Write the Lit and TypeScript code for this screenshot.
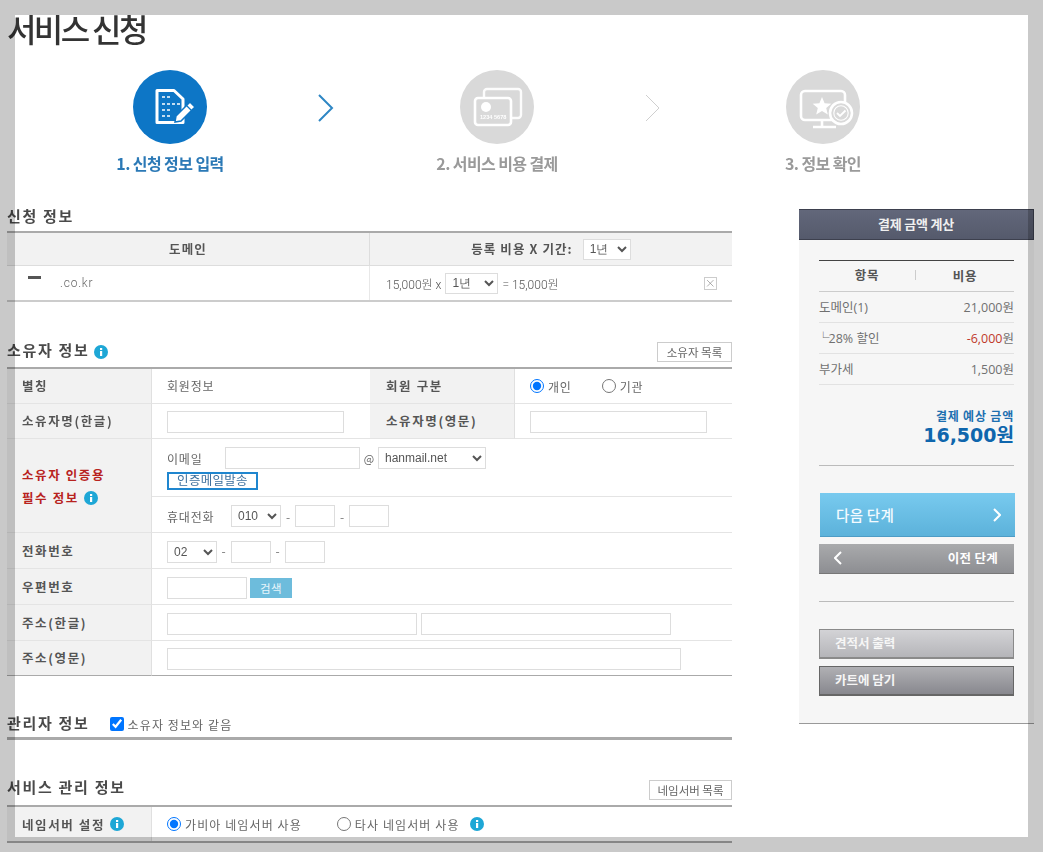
import { LitElement, html, css, svg } from "lit";
import { customElement } from "lit/decorators.js";

const info = html`<svg class="info" viewBox="0 0 14 14" width="14" height="14"><circle cx="7" cy="7" r="7" fill="#1ea7d6"/><rect x="6" y="6" width="2.2" height="5" fill="#fff"/><rect x="6" y="3" width="2.2" height="2" fill="#fff"/></svg>`;

const chev = (color: string, w: number) => html`<svg width="17" height="28" viewBox="0 0 17 28"><path d="M2 1 L15 14 L2 27" fill="none" stroke=${color} stroke-width=${w}/></svg>`;

const docIcon = svg`<circle cx="37" cy="37" r="37" fill="#0d76c6"/>
<path d="M24 20.5 H41 L50 29 V52.5 H24 Z" fill="#0d76c6" stroke="#fff" stroke-width="3" stroke-linejoin="round"/>
<path d="M29 27 h3 m2 0 h3 M29 34 h3 m2 0 h3 m2 0 h3 m2 0 h3 M29 40 h3 m2 0 h3 M29 46 h3 m2 0 h3" stroke="#fff" stroke-width="1.4"/>
<path d="M43 46 L57 32 L62 37 L48 51 L42 52 Z" fill="#fff" stroke="#0d76c6" stroke-width="1.5"/>
<path d="M53.5 35.5 L58.5 40.5" stroke="#0d76c6" stroke-width="1.2"/>`;

const cardIcon = svg`<circle cx="37" cy="37" r="37" fill="#d9d9d9"/>
<path d="M24 27 V22 a3 3 0 0 1 3-3 H58 a3 3 0 0 1 3 3 V45 a3 3 0 0 1-3 3 H52" fill="none" stroke="#fff" stroke-width="2.4" opacity=".9"/>
<rect x="15" y="28" width="36" height="27" rx="3" fill="#d9d9d9" stroke="#fff" stroke-width="2.6"/>
<circle cx="26" cy="37" r="5" fill="#fff"/>
<text x="20" y="49" font-size="5.6" font-weight="700" fill="#fff" font-family="Liberation Sans, sans-serif">1234 5678</text>`;

const monIcon = svg`<circle cx="37" cy="37" r="37" fill="#d9d9d9"/>
<rect x="15" y="21" width="44" height="29" rx="4" fill="none" stroke="#fff" stroke-width="2.6"/>
<path d="M36 50 V56 M27 57 H50" stroke="#fff" stroke-width="2.6"/>
<path d="M36 27 L38.6 33.2 L45.3 33.7 L40.2 38 L41.8 44.6 L36 41 L30.2 44.6 L31.8 38 L26.7 33.7 L33.4 33.2 Z" fill="#fff"/>
<circle cx="55" cy="43" r="11" fill="#d9d9d9" stroke="#fff" stroke-width="2.6"/>
<circle cx="55" cy="43" r="7.2" fill="none" stroke="#fff" stroke-width="1.1"/>
<path d="M51 43 L54 46 L59.5 40.5" fill="none" stroke="#fff" stroke-width="1.8"/>`;

@customElement("app-root")
export class AppRoot extends LitElement {
  static styles = css`
    :host { display: block; width: 1043px; height: 852px; overflow: hidden; background: #c9c9c9; padding: 15px; box-sizing: border-box; font-family: "Noto Sans CJK KR", "Liberation Sans", sans-serif; color: #666; font-size: 12px; }
    * { box-sizing: border-box; }
    .panel { display: flow-root; width: 1013px; height: 822px; background: #fff; }
    .sheet { width: 1027px; margin-left: -8px; mix-blend-mode: multiply; }
    h1 { margin: -2px 0 0; height: 30px; font-size: 32px; line-height: 30px; font-weight: 500; letter-spacing: -2.6px; color: #333; }
    .steps { display: flex; margin-top: 27px; padding-left: 89px; height: 104px; }
    .step { width: 148px; display: flex; flex-direction: column; align-items: center; }
    .step svg { display: block; }
    .step span { margin-top: 9px; height: 20px; line-height: 20px; font-size: 16px; font-weight: 700; letter-spacing: -.6px; color: #9a9a9a; white-space: nowrap; }
    .step.on span { color: #2b79b6; }
    .arrow { width: 178px; height: 74px; padding: 2px 16px 0 0; display: flex; align-items: center; justify-content: center; }
    .arrow.a1 { width: 179px; }
    .body { display: flex; margin-top: 34px; }
    .main { width: 725px; flex: none; }
    .side { width: 235px; margin-left: 67px; margin-top: 1px; flex: none; }
    .head { display: flex; align-items: flex-start; justify-content: space-between; height: 25px; }
    .head.first { height: 23px; }
    .tail { display: flex; align-items: flex-start; }
    h2 { margin: 0; font-size: 15px; line-height: 16px; font-weight: 700; letter-spacing: 1.7px; color: #4a4a4a; white-space: nowrap; }
    .info { display: block; flex: none; }
    .head .info { margin-left: 4px; margin-top: 3px; }
    .mini { width: 75px; height: 20px; border: 1px solid #ccc; background: #fff; font: inherit; font-size: 11.5px; color: #666; padding: 0; }
    .mini.wide { width: 83px; }
    .domain { border-top: 2px solid #aaa; border-bottom: 2px solid #ccc; height: 71px; display: grid; grid-template-columns: 363px 362px; grid-template-rows: 33px 34px; }
    .domain > div { display: flex; align-items: center; }
    .dh { background: #f2f2f2; justify-content: center; font-weight: 700; font-size: 12.5px; letter-spacing: 1.1px; color: #555; border-bottom: 1px solid #ddd; padding-bottom: 2px; }
    .dh.l { border-right: 1px solid #ddd; }
    .dd.l { border-right: 1px solid #e8e8e8; padding-left: 21px; }
    .dd.r { padding-left: 16px; font-family: "Roboto", "Noto Sans CJK KR", sans-serif; font-weight: 300; font-size: 12px; letter-spacing: 0; color: #555; }
    .blot { width: 13px; height: 3px; background: #555; margin-top: -12px; }
    .tld { margin-left: 19px; font-family: "Roboto", sans-serif; font-weight: 300; font-size: 12px; letter-spacing: .8px; }
    select { height: 22px; border: 1px solid #ddd; background: #fff; font-family: "Liberation Sans", sans-serif; font-size: 12px; color: #555; padding: 0 0 0 2px; margin: 0; border-radius: 0; }
    .dh select { width: 48px; height: 21px; margin: 2px 0 0 10px; font-weight: 400; letter-spacing: 0; }
    .dd select { width: 53px; margin: 0 4px; height: 21px; }
    .x { margin-left: auto; margin-right: 15px; width: 13px; height: 13px; border: 1px solid #ccc; display: block; background: #fff; }
    .form { border-top: 2px solid #aaa; display: grid; grid-template-columns: 145px 218px 145px 217px; grid-template-rows: 35px 35px 94px 36px 36px 36px 35px; }
    .form > div { display: flex; align-items: center; border-bottom: 1px solid #e4e4e4; }
    .form > div.end { border-bottom-color: #aaa; }
    .lab { background: #f2f2f2; border-right: 1px solid #e0e0e0; padding-left: 15px; font-weight: 700; font-size: 12.5px; letter-spacing: 1.6px; color: #555; gap: 5px; white-space: nowrap; }
    .lab.r { padding-left: 16px; }
    .form > .up { padding-bottom: 2px; }
    .form > .lab.red { color: #b8231e; display: block; padding-top: 24px; line-height: 23px; }
    .lab.red .ln { display: flex; align-items: center; gap: 5px; }
    .val { padding-left: 15px; letter-spacing: .8px; gap: 14px; }
    .val input[type="text"], .val select { margin-top: 2px; }
    .search { margin-top: 2px; }
    .span3 { grid-column: span 3; }
    input[type="text"] { height: 22px; border: 1px solid #ddd; background: #fff; padding: 0; margin: 0; display: block; flex: none; }
    .w177 { width: 177px; } .w135 { width: 135px; } .w40 { width: 40px; } .w80 { width: 80px; } .w250 { width: 250px; } .w514 { width: 514px; }
    .form > .stack { display: block; padding: 0; }
    .upper { height: 58px; padding: 8px 0 0 15px; border-bottom: 1px solid #e4e4e4; }
    .lower { height: 35px; padding: 3px 0 0 15px; display: flex; align-items: center; }
    .line { display: flex; align-items: center; }
    .tag { display: block; flex: none; }
    .t58 { width: 58px; letter-spacing: .8px; } .t64 { width: 64px; letter-spacing: .8px; }
    .at { width: 18px; text-align: center; font-size: 11px; }
    .send { display: block; margin-top: 3px; width: 91px; height: 18px; border: 2px solid #1f86cf; color: #3d6f9c; background: #fff; font: inherit; font-size: 12.5px; line-height: 11px; letter-spacing: .3px; padding: 0 0 3px; }
    .dash { width: 14px; text-align: center; flex: none; color: #777; }
    .gapless { gap: 0; }
    .s50 { width: 50px; }
    .s108 { width: 108px; }
    .search { margin-left: 3px; width: 42px; height: 20px; border: 0; background: #6dbcdc; color: #e8f6fb; font: inherit; font-size: 11.5px; padding: 0; letter-spacing: .5px; }
    .gap4 { gap: 4px; }
    label { display: flex; align-items: center; white-space: nowrap; }
    input[type="radio"], input[type="checkbox"] { width: 14px; height: 14px; margin: 0 4px 0 0; flex: none; }
    .admin { margin-top: 39px; height: 25px; border-bottom: 3px solid #aaa; display: flex; align-items: flex-start; }
    .admin label { margin-left: 20px; margin-top: 1px; height: 16px; letter-spacing: 1.1px; }
    .s4 { margin-top: 40px; }
    .s4 h2 { margin-top: -1px; }
    .svc { border-top: 2px solid #aaa; display: grid; grid-template-columns: 145px 580px; height: 38px; border-bottom: 2px solid #aaa; }
    .svc > div { display: flex; align-items: center; }
    .svc .lab { gap: 5px; }
    .svc .val { gap: 0; letter-spacing: 1.1px; }
    .svc .o2 { margin-left: 35px; }
    .svc .val > .info { margin-left: 10px; }
    .side-h { height: 31px; padding-bottom: 2px; background: linear-gradient(#62677a, #555a6c); border: 1px solid #3d404e; border-width: 1px 1px 1px 0; color: #f0f0f0; display: flex; align-items: center; justify-content: center; font-weight: 700; font-size: 13px; letter-spacing: -.2px; }
    .side-b { height: 484px; background: #f6f6f6; border-bottom: 1px solid #999; padding: 20px 20px 0; }
    .calc { width: 195px; }
    .calc-h { height: 32px; padding-bottom: 2px; border-top: 1px solid #444; border-bottom: 1px solid #ccc; display: grid; grid-template-columns: 97px 98px; align-items: center; text-align: center; font-weight: 700; font-size: 12.5px; letter-spacing: .8px; color: #555; }
    .calc-h span:first-child { border-right: 1px solid #ccc; line-height: 10px; }
    .calc-r { height: 31px; padding-bottom: 2px; border-bottom: 1px solid #e2e2e2; display: flex; justify-content: space-between; align-items: center; font-size: 12.5px; color: #707070; font-family: "Open Sans", "Noto Sans CJK KR", sans-serif; }
    .corner { letter-spacing: -4px; margin-left: -2px; margin-right: 3px; }
    .minus { color: #c0392b; }
    .tot1 { text-align: right; margin-top: 23px; line-height: 16px; color: #1d6fb0; font-weight: 700; font-size: 12px; letter-spacing: .8px; }
    .tot2 { text-align: right; line-height: 24px; margin-top: -1px; color: #0f66ad; font-size: 19px; font-weight: 700; font-family: "DejaVu Sans", "Noto Sans CJK KR", sans-serif; }
    .rule { height: 1px; background: #bbb; width: 195px; }
    .r1 { margin-top: 18px; }
    .next { margin: 27px 0 0 1px; width: 195px; height: 44px; display: flex; align-items: center; justify-content: space-between; padding: 0 14px 0 16px; background: linear-gradient(#78caef, #5cb2da); color: #f4fbff; font-size: 14.5px; font-weight: 500; letter-spacing: .3px; border-bottom: 1px solid #4d9cc5; }
    .prev { margin-top: 7px; width: 195px; height: 30px; display: flex; align-items: center; justify-content: space-between; padding: 0 16px 2px 15px; background: linear-gradient(#a9aaac, #8d8e92); color: #fff; font-size: 12.5px; font-weight: 700; letter-spacing: .3px; border-bottom: 1px solid #777; }
    .r2 { margin-top: 27px; }
    .gbtn { width: 195px; height: 30px; display: flex; align-items: center; padding: 0 0 2px 15px; border: 1px solid #8a8a8a; border-width: 1px 1px 2px; font-size: 12.5px; font-weight: 700; color: #f6f6f6; }
    .g1 { margin-top: 27px; background: linear-gradient(#d3d3d6, #b5b5b9); }
    .g2 { margin-top: 7px; background: linear-gradient(#b0b0b4, #88888e); border-color: #666; }
  `;

  render() {
    return html`<div class="panel"><div class="sheet">
      <h1>서비스 신청</h1>
      <div class="steps">
        <div class="step on"><svg width="74" height="74" viewBox="0 0 74 74">${docIcon}</svg><span>1. 신청 정보 입력</span></div>
        <div class="arrow a1">${chev("#2e86c4", 2)}</div>
        <div class="step"><svg width="74" height="74" viewBox="0 0 74 74">${cardIcon}</svg><span>2. 서비스 비용 결제</span></div>
        <div class="arrow">${chev("#cfcfcf", 1)}</div>
        <div class="step"><svg width="74" height="74" viewBox="0 0 74 74">${monIcon}</svg><span>3. 정보 확인</span></div>
      </div>
      <div class="body">
        <div class="main">
          <div class="head first"><h2>신청 정보</h2></div>
          <div class="domain">
            <div class="dh l">도메인</div>
            <div class="dh">등록 비용 X 기간: <select><option>1년</option></select></div>
            <div class="dd l"><i class="blot"></i><span class="tld">.co.kr</span></div>
            <div class="dd r">15,000원 x <select><option>1년</option></select> = 15,000원
              <svg class="x" viewBox="0 0 13 13"><path d="M2.5 2.5 L10 10 M10 2.5 L2.5 10" stroke="#888" stroke-width=".8"/></svg></div>
          </div>

          <div class="head" style="margin-top:40px">
            <div class="tail"><h2>소유자 정보</h2>${info}</div>
            <button class="mini">소유자 목록</button>
          </div>
          <div class="form">
            <div class="lab up">별칭</div><div class="val up">회원정보</div>
            <div class="lab r up">회원 구분</div>
            <div class="val" style="gap:30px"><label><input type="radio" name="k" checked>개인</label><label><input type="radio" name="k">기관</label></div>

            <div class="lab up">소유자명(한글)</div><div class="val"><input type="text" class="w177"></div>
            <div class="lab r up">소유자명(영문)</div><div class="val"><input type="text" class="w177"></div>

            <div class="lab red"><div class="ln">소유자 인증용</div><div class="ln">필수 정보 ${info}</div></div>
            <div class="span3 stack">
              <div class="upper">
                <div class="line"><span class="tag t58">이메일</span><input type="text" class="w135"><span class="at">@</span><select class="s108"><option>hanmail.net</option></select></div>
                <button class="send">인증메일발송</button>
              </div>
              <div class="lower"><span class="tag t64">휴대전화</span><select class="s50"><option>010</option></select><span class="dash">-</span><input type="text" class="w40"><span class="dash">-</span><input type="text" class="w40"></div>
            </div>

            <div class="lab">전화번호</div>
            <div class="val span3 gapless"><select class="s50"><option>02</option></select><span class="dash">-</span><input type="text" class="w40"><span class="dash">-</span><input type="text" class="w40"></div>

            <div class="lab">우편번호</div>
            <div class="val span3 gapless"><input type="text" class="w80"><button class="search">검색</button></div>

            <div class="lab">주소(한글)</div>
            <div class="val span3 gap4"><input type="text" class="w250"><input type="text" class="w250"></div>

            <div class="lab end up">주소(영문)</div>
            <div class="val span3 end"><input type="text" class="w514"></div>
          </div>

          <div class="admin"><h2>관리자 정보</h2><label><input type="checkbox" checked>소유자 정보와 같음</label></div>

          <div class="head s4">
            <h2>서비스 관리 정보</h2>
            <button class="mini wide">네임서버 목록</button>
          </div>
          <div class="svc">
            <div class="lab">네임서버 설정 ${info}</div>
            <div class="val"><label><input type="radio" name="n" checked>가비아 네임서버 사용</label><label class="o2"><input type="radio" name="n">타사 네임서버 사용</label>${info}</div>
          </div>
        </div>

        <div class="side">
          <div class="side-h">결제 금액 계산</div>
          <div class="side-b">
            <div class="calc">
              <div class="calc-h"><span>항목</span><span>비용</span></div>
              <div class="calc-r"><span>도메인(1)</span><span>21,000원</span></div>
              <div class="calc-r"><span><span class="corner">└</span>28% 할인</span><span><span class="minus">-6,000</span>원</span></div>
              <div class="calc-r"><span>부가세</span><span>1,500원</span></div>
              <div class="tot1">결제 예상 금액</div>
              <div class="tot2">16,500원</div>
            </div>
            <div class="rule r1"></div>
            <div class="next"><span>다음 단계</span><svg width="8" height="14" viewBox="0 0 8 14"><path d="M1 1 L7 7 L1 13" fill="none" stroke="#fff" stroke-width="2"/></svg></div>
            <div class="prev"><svg width="8" height="14" viewBox="0 0 8 14"><path d="M7 1 L1 7 L7 13" fill="none" stroke="#fff" stroke-width="2"/></svg><span>이전 단계</span></div>
            <div class="rule r2"></div>
            <div class="gbtn g1">견적서 출력</div>
            <div class="gbtn g2">카트에 담기</div>
          </div>
        </div>
      </div>
    </div></div>`;
  }
}
